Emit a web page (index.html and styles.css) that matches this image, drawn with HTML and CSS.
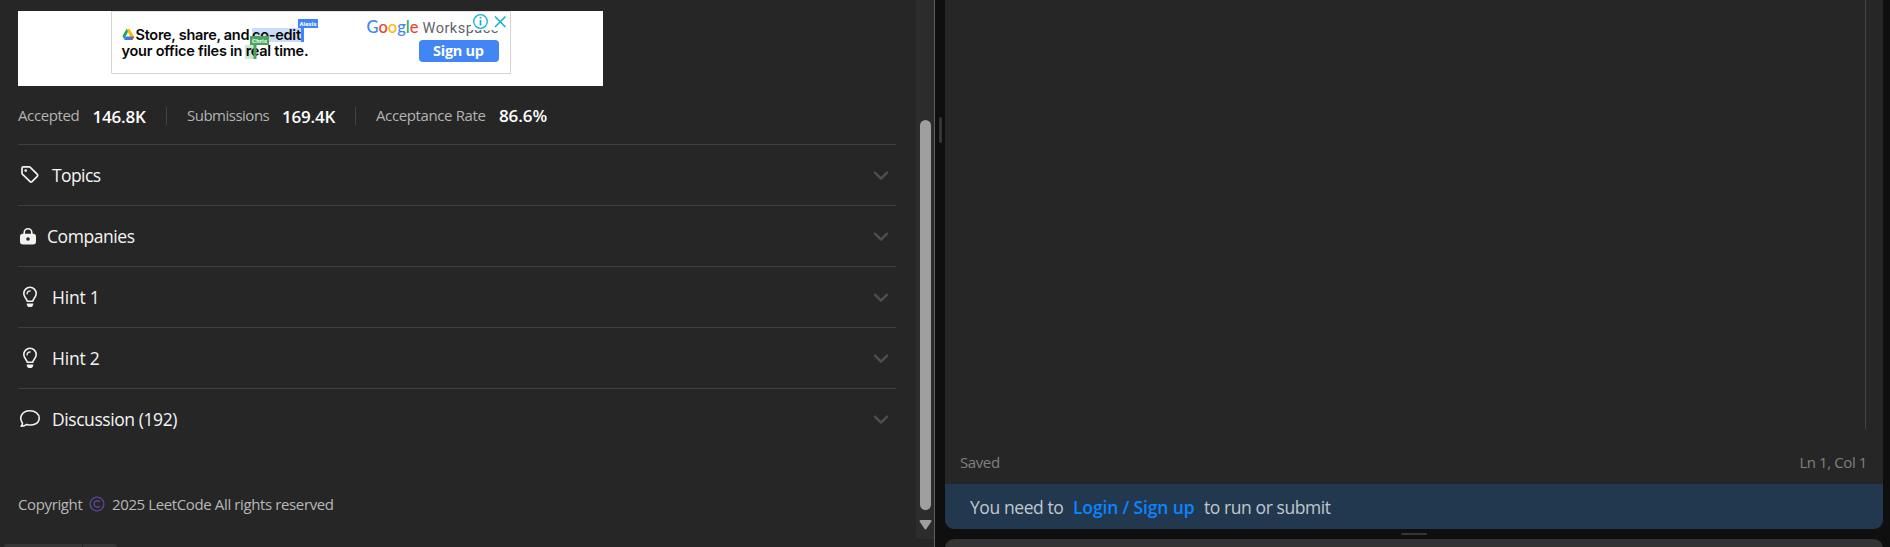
FILE: index.html
```html
<!DOCTYPE html>
<html lang="en">
<head>
<meta charset="utf-8">
<title>LeetCode</title>
<link rel="stylesheet" href="styles.css">
</head>
<body>
<svg width="0" height="0" class="defs">
  <symbol id="chevron" viewBox="0 0 18 12"><path d="M3 2.7 9 8.7 15 2.7" fill="none" stroke="#4e4e4e" stroke-width="2.4" stroke-linecap="round" stroke-linejoin="round"/></symbol>
  <symbol id="bulb" viewBox="0 0 16 22"><path d="M5.2 15.2C4.9 12.6 1.8 11.200 1.800 7.500A6.200 6.200 0 0 1 14.200 7.500C14.200 11.200 11.100 12.600 10.800 15.200Z" fill="none" stroke="#f2f2f2" stroke-width="1.600" stroke-linejoin="round"/><path d="M5 8A3.200 3.200 0 0 1 8.200 4.900" fill="none" stroke="#f2f2f2" stroke-width="1.200" stroke-linecap="round"/><path d="M4.700 17.400H11.300A3.300 3.600 0 0 1 4.700 17.400Z" fill="#f2f2f2"/></symbol>
</svg>
<div class="app">
  <main class="problem">
    <div class="content">
      <section class="ad">
        <svg width="400" height="63" viewBox="0 0 400 63">
          <path d="M.5 0V62.500H399.500V0" fill="#fff" stroke="#d4d4d4"/>
          <path d="M0 .5H400" stroke="#e2e2e2"/>
          <rect x="141" y="17" width="50" height="14" fill="#cbdcf8"/>
          <rect x="134" y="34" width="9" height="14" fill="#cfe5d3"/>
          <path d="M15.500 18H18.500L14.500 25.500 13.200 28.200 11.500 25Z" fill="#14a55a"/>
          <path d="M15.500 18H18.500L23.200 26H19.300Z" fill="#fbbc04"/>
          <path d="M14.500 25.500H23.200L21.200 29H13.200Z" fill="#3979f0"/>
          <path d="M19.300 26H23.200L21.500 29Z" fill="#ea4335"/>
          <g class="ad-copy">
            <text x="24.500" y="29" textLength="114">Store, share, and</text>
            <text x="141" y="29" textLength="49">co-edit</text>
            <text x="10.500" y="45" textLength="187">your office files in real time.</text>
          </g>
          <rect x="190" y="17" width="3" height="14" fill="#4285f4"/>
          <rect x="187" y="8" width="20" height="9" fill="#4285f4"/>
          <text class="tag" x="188.500" y="15" textLength="17">Alexis</text>
          <rect x="142.500" y="33" width="3" height="15" fill="#4aa35d"/>
          <rect x="139" y="25" width="19" height="9" fill="#4aa35d"/>
          <text class="tag" x="141" y="31.800" textLength="15">Chris</text>
          <text class="brand" x="255.500" y="22" textLength="52"><tspan fill="#4285f4">G</tspan><tspan fill="#ea4335">o</tspan><tspan fill="#fbbc04">o</tspan><tspan fill="#4285f4">g</tspan><tspan fill="#34a853">l</tspan><tspan fill="#ea4335">e</tspan></text>
          <text class="suite" x="311.500" y="22" textLength="76">Workspace</text>
          <rect x="360" y="1" width="39" height="18" fill="#fff"/>
          <circle cx="369.500" cy="10.500" r="6.800" fill="#fff" stroke="#12b0cf" stroke-width="1.300"/>
          <path d="M369.500 9V14.500M369.500 6V7.600" stroke="#12b0cf" stroke-width="1.700"/>
          <path d="M384 5.500 394.500 16M394.500 5.500 384 16" stroke="#12b0cf" stroke-width="1.500"/>
          <rect x="308" y="29" width="80" height="22" rx="4" fill="#4285f4"/>
          <text class="cta" x="322" y="45" textLength="51">Sign up</text>
        </svg>
      </section>
      <dl class="stats">
        <div class="stat s1"><dt>Accepted</dt><dd>146.8K</dd></div>
        <div class="stat s2"><dt>Submissions</dt><dd>169.4K</dd></div>
        <div class="stat s3"><dt>Acceptance Rate</dt><dd>86.6%</dd></div>
      </dl>
      <div class="rows">
        <div class="row"><svg class="icon" width="24" height="24" viewBox="0 0 24 24"><path d="M4 5.200Q4 3.900 5.300 3.900H11.200Q11.800 3.900 12.300 4.400L19.300 11.400Q20.200 12.400 19.300 13.300L14 18.700Q13 19.600 12.100 18.700L4.600 11.400Q4 10.900 4 10.300Z" fill="none" stroke="#f2f2f2" stroke-width="1.700"/><circle cx="7.700" cy="7.600" r="1.300" fill="#f2f2f2"/></svg><span class="label topics">Topics</span><svg class="chev" width="18" height="12"><use href="#chevron"/></svg></div>
        <div class="row"><svg class="icon lock" width="20" height="20" viewBox="0 0 20 20"><path d="M6.200 9V6.500A3.800 3.800 0 0 1 13.800 6.500V9" fill="none" stroke="#f2f2f2" stroke-width="1.600"/><path d="M4.700 7.800H15.300Q18 7.800 18 10.500V15.500Q18 18.500 15 18.500H5Q2 18.500 2 15.500V10.500Q2 7.800 4.700 7.800Z" fill="#f2f2f2"/><circle cx="10" cy="13" r="1.800" fill="#262626"/></svg><span class="label companies">Companies</span><svg class="chev" width="18" height="12"><use href="#chevron"/></svg></div>
        <div class="row"><svg class="icon bulb" width="16" height="22"><use href="#bulb"/></svg><span class="label hint">Hint 1</span><svg class="chev" width="18" height="12"><use href="#chevron"/></svg></div>
        <div class="row"><svg class="icon bulb" width="16" height="22"><use href="#bulb"/></svg><span class="label hint">Hint 2</span><svg class="chev" width="18" height="12"><use href="#chevron"/></svg></div>
        <div class="row"><svg class="icon" width="24" height="24" viewBox="0 0 24 24"><path d="M3.200 19.200C4.400 18.200 4.700 17.200 4.400 15.900C1 11.500 3 3.700 12 3.700C17.200 3.700 21.200 6.800 21.200 10.900C21.200 16.700 14.600 19.300 8.800 17.400C7.200 18.600 5.200 19.300 3.200 19.200Z" fill="none" stroke="#f2f2f2" stroke-width="1.600" stroke-linejoin="round"/></svg><span class="label discussion">Discussion (192)</span><svg class="chev" width="18" height="12"><use href="#chevron"/></svg></div>
      </div>
      <footer class="copyright"><span class="c1">Copyright</span><svg width="16" height="16" viewBox="0 0 16 16"><g fill="none" stroke="#5c4796" stroke-width="1.400"><circle cx="8" cy="8" r="6.900"/><path d="M10.700 10A3.200 3.200 0 1 1 10.700 6"/></g></svg><span class="c2">2025 LeetCode All rights reserved</span></footer>
    </div>
    <div class="scrollbar"><div class="thumb"></div><svg width="13" height="10" viewBox="0 0 13 10"><path d="M1.500 1H11.500L6.500 8.500Z" fill="#9f9f9f" stroke="#9f9f9f" stroke-width="2" stroke-linejoin="round"/></svg></div>
    <div class="tabs"><i></i><i></i></div>
  </main>
  <div class="gutter"><div class="grip"></div></div>
  <div class="right">
    <section class="editor">
      <div class="code"></div>
      <div class="status"><span class="saved">Saved</span><span class="pos">Ln 1, Col 1</span></div>
      <div class="notice"><span class="n1">You need to</span><a class="n2">Login / Sign up</a><span class="n3">to run or submit</span></div>
    </section>
    <div class="hgrip"></div>
    <section class="console"></section>
  </div>
</div>
</body>
</html>
```
FILE: styles.css
```css
* { box-sizing: border-box; }
body { margin: 0; background: #0f0f0f; font-family: "Open Sans", "Noto Sans", sans-serif; overflow: hidden; }
.defs { display: none; }
.app { display: flex; width: 1890px; height: 547px; overflow: hidden; }
.problem { position: relative; display: flex; width: 935px; background: #262626; border-right: 1px solid #5d5d5d; }
.content { width: 916px; padding: 11px 20px 0 18px; }
.ad { width: 585px; height: 75px; padding-left: 93px; background: #fff; }
.ad svg { display: block; }
.ad-copy { font: 600 14.5px "Inter", sans-serif; fill: #080808; }
.tag { font: 700 6px Roboto, sans-serif; fill: #fff; }
.brand { font: 500 16.5px Lato, sans-serif; }
.suite { font: 400 14.500px Roboto, sans-serif; fill: #5f6368; }
.cta { font: 700 14.500px "Open Sans", sans-serif; fill: #fff; }
.stats { display: flex; align-items: center; height: 58px; margin: 0; padding-top: 2px; }
.stat { display: flex; align-items: center; height: 18px; white-space: nowrap; }
.s1 { width: 149px; border-right: 1px solid #444; }
.s2 { width: 189px; padding-left: 20px; border-right: 1px solid #444; }
.s3 { padding-left: 20px; }
dt { margin-top: -2px; font-size: 15px; letter-spacing: -.38px; color: #b3b3b3; }
dd { margin: 0; font-size: 17px; font-weight: 600; letter-spacing: -.2px; color: #fff; }
.s1 dt { width: 74.5px; }
.s2 dt { width: 95px; letter-spacing: -.5px; }
.s3 dt { width: 123px; }
.s3 dd { margin-top: -2px; letter-spacing: -.1px; }
.row { display: flex; align-items: center; height: 61px; border-top: 1px solid #3f3f3f; color: #f5f5f5; font-size: 17.5px; white-space: nowrap; }
.icon { flex: none; margin-right: 10px; }
.icon.lock { margin-right: 9px; }
.icon.bulb { margin: 0 14px 0 4px; }
.row .chev { margin: 2px 6px 0 auto; }
.label { letter-spacing: -.43px; }
.label.topics { letter-spacing: -.6px; }
.label.hint { letter-spacing: -.2px; }
.copyright { display: flex; align-items: center; height: 24px; margin-top: 43px; color: #b8b8b8; font-size: 15px; letter-spacing: -.38px; white-space: nowrap; }
.copyright svg { margin-left: -1px; }
.c1 { width: 72px; }
.c2 { margin-left: 7px; }
.scrollbar { display: flex; flex-direction: column; align-items: center; width: 18px; height: 539px; padding-top: 120px; background: #2c2c2c; }
.thumb { width: 11px; height: 390px; margin-bottom: 10px; border-radius: 6px; background: #9f9f9f; }
.tabs { position: absolute; left: 4px; bottom: 0; display: flex; gap: 1px; width: 113px; height: 3px; }
.tabs i { background: #363636; width: 78px; border-radius: 8px 0 0 0; }
.tabs i + i { width: 34px; border-radius: 0 8px 0 0; }
.gutter { width: 10px; padding: 117px 0 0 4px; }
.grip { width: 3px; height: 26px; border-radius: 2px; background: #353535; }
.right { width: 938px; }
.editor { height: 529px; background: #262626; border-radius: 0 0 9px 9px; overflow: hidden; }
.code { height: 429px; width: 921px; border-right: 1px solid #444; }
.status { display: flex; justify-content: space-between; align-items: center; height: 55px; padding: 10px 16px 0 15px; color: #808080; font-size: 15px; letter-spacing: -.4px; }
.notice { display: flex; align-items: center; height: 45px; padding: 1px 0 0 25px; background: #22384f; color: #c1c7cd; font-size: 17.5px; letter-spacing: -.42px; white-space: nowrap; }
.n1 { width: 103px; }
.n2 { width: 131px; color: #0a84ff; font-weight: 600; letter-spacing: -.15px; }
.hgrip { width: 26px; height: 2px; margin: 4px 0 4px 456px; border-radius: 1px; background: #353535; }
.console { height: 20px; background: #333; border-radius: 9px 9px 0 0; }
```
